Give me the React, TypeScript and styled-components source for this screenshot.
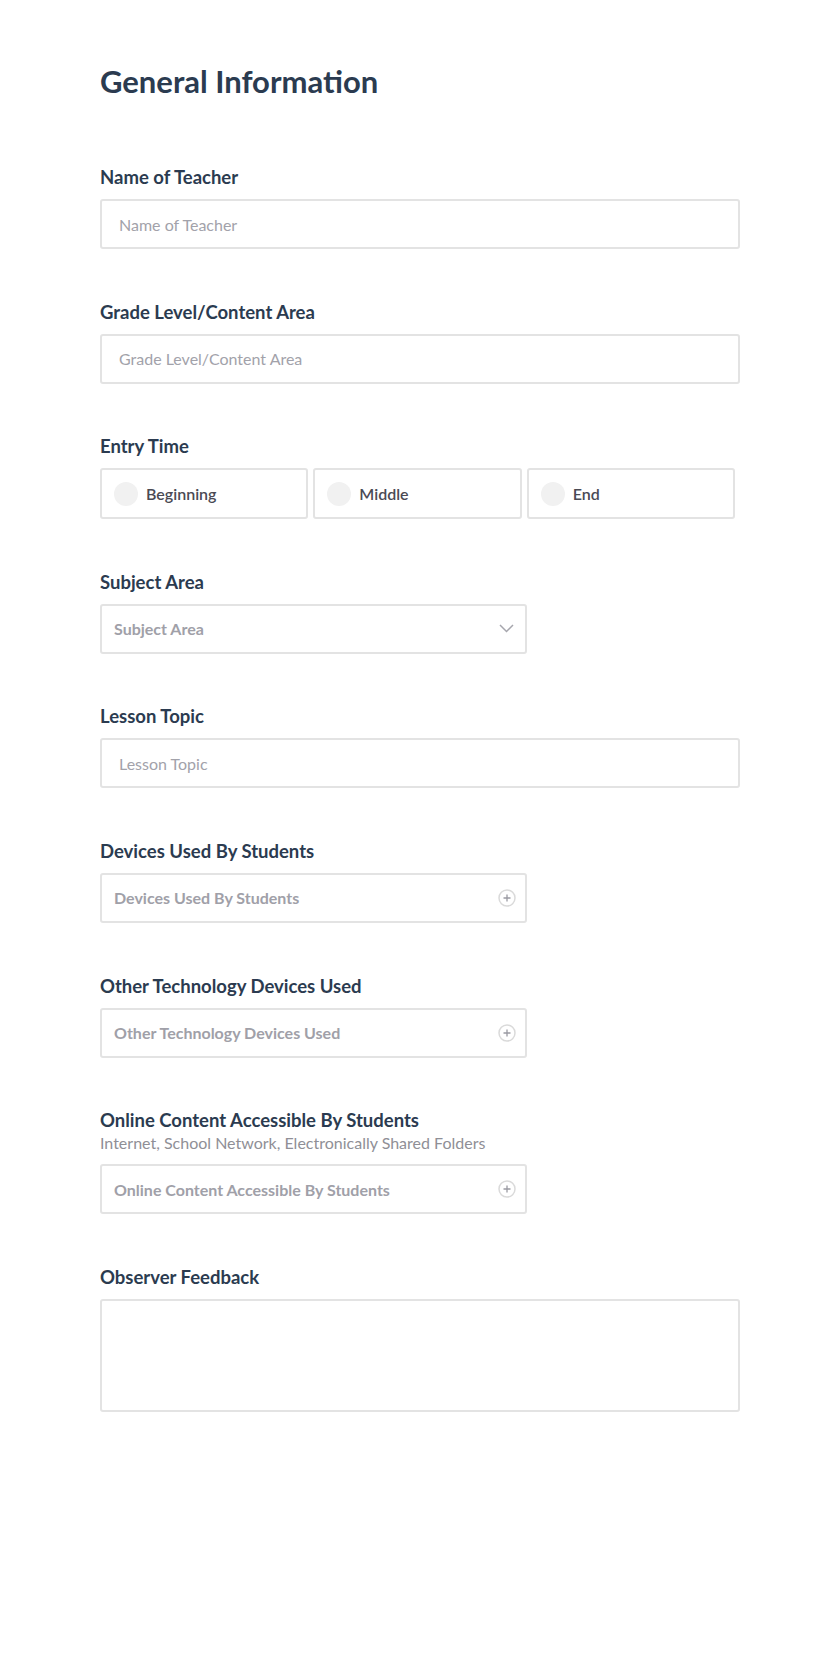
import React from 'react';
import styled, { createGlobalStyle } from 'styled-components';

const GlobalStyle = createGlobalStyle`
  body {
    margin: 0;
    background: #ffffff;
    font-family: Lato, "Open Sans", sans-serif;
  }
`;

const Page = styled.div`
  width: 640px;
  padding: 63px 0 200px 100px;
`;

const Title = styled.h1`
  margin: 0 0 67px;
  font-size: 31px;
  line-height: 36px;
  font-weight: 700;
  color: #2b3b50;
`;

const Field = styled.div`
  display: flex;
  flex-direction: column;
  margin-bottom: 51.6px;
`;

const Label = styled.label`
  font-size: 18.5px;
  line-height: 22px;
  font-weight: 700;
  color: #2b3b50;
  margin-bottom: 11px;
`;

const SubLabel = styled.div`
  font-size: 16px;
  line-height: 20px;
  color: #8f8f96;
  margin: -9px 0 11px;
`;

const TextInput = styled.input`
  box-sizing: border-box;
  width: 100%;
  height: 50px;
  padding: 0 17px;
  border: 2px solid #e3e3e3;
  border-radius: 3px;
  font-family: inherit;
  font-size: 16px;
  color: #333;
  outline: none;

  &::placeholder {
    color: #a2a2aa;
  }
`;

const TextArea = styled.textarea`
  box-sizing: border-box;
  display: block;
  width: 100%;
  height: 113px;
  border: 2px solid #e3e3e3;
  border-radius: 3px;
  resize: none;
  outline: none;
  font-family: inherit;
  font-size: 16px;
`;

const RadioRow = styled.div`
  display: flex;
  gap: 5px;
`;

const RadioOption = styled.label`
  box-sizing: border-box;
  width: 208.33px;
  height: 51px;
  display: flex;
  align-items: center;
  gap: 8px;
  padding-left: 12px;
  border: 2px solid #e3e3e3;
  border-radius: 3px;
  font-size: 16px;
  font-weight: 600;
  color: #4a4a54;
`;

const RadioDot = styled.span`
  width: 24px;
  height: 24px;
  border-radius: 50%;
  background: #f1f1f1;
`;

const Picker = styled.div<{ $wide?: boolean }>`
  box-sizing: border-box;
  width: ${(p) => (p.$wide ? '100%' : '426.67px')};
  height: 50px;
  display: flex;
  align-items: center;
  justify-content: space-between;
  padding: 0 9px 0 12px;
  border: 2px solid #e3e3e3;
  border-radius: 3px;
  font-size: 16px;
  font-weight: 700;
  color: #a0a0a8;
`;

const IconBox = styled.span`
  width: 18px;
  height: 18px;
  display: flex;
  align-items: center;
  justify-content: center;
`;

const Chevron = () => (
  <IconBox>
    <svg width="15" height="9" viewBox="0 0 15 9" fill="none">
      <path d="M1 1l6.5 6.5L14 1" stroke="#a6a6ad" strokeWidth="1.5" />
    </svg>
  </IconBox>
);

const PlusCircle = () => (
  <IconBox>
    <svg width="18" height="18" viewBox="0 0 18 18" fill="none">
      <circle cx="9" cy="9" r="8" stroke="#dadada" strokeWidth="1.5" />
      <path d="M9 5.5v7M5.5 9h7" stroke="#9a9aa2" strokeWidth="1.3" />
    </svg>
  </IconBox>
);

export default function App() {
  return (
    <>
      <GlobalStyle />
      <Page>
        <Title>General Information</Title>

        <Field>
          <Label>Name of Teacher</Label>
          <TextInput placeholder="Name of Teacher" />
        </Field>

        <Field>
          <Label>Grade Level/Content Area</Label>
          <TextInput placeholder="Grade Level/Content Area" />
        </Field>

        <Field>
          <Label>Entry Time</Label>
          <RadioRow>
            {['Beginning', 'Middle', 'End'].map((o) => (
              <RadioOption key={o}>
                <RadioDot />
                {o}
              </RadioOption>
            ))}
          </RadioRow>
        </Field>

        <Field>
          <Label>Subject Area</Label>
          <Picker>
            Subject Area
            <Chevron />
          </Picker>
        </Field>

        <Field>
          <Label>Lesson Topic</Label>
          <TextInput placeholder="Lesson Topic" />
        </Field>

        <Field>
          <Label>Devices Used By Students</Label>
          <Picker>
            Devices Used By Students
            <PlusCircle />
          </Picker>
        </Field>

        <Field>
          <Label>Other Technology Devices Used</Label>
          <Picker>
            Other Technology Devices Used
            <PlusCircle />
          </Picker>
        </Field>

        <Field>
          <Label>Online Content Accessible By Students</Label>
          <SubLabel>Internet, School Network, Electronically Shared Folders</SubLabel>
          <Picker>
            Online Content Accessible By Students
            <PlusCircle />
          </Picker>
        </Field>

        <Field>
          <Label>Observer Feedback</Label>
          <TextArea />
        </Field>
      </Page>
    </>
  );
}
